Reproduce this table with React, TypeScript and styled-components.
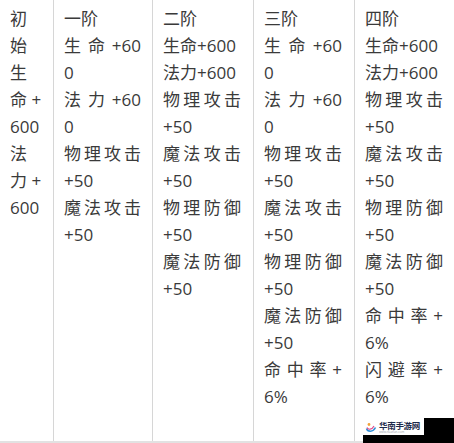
import * as React from 'react';
import styled, { createGlobalStyle } from 'styled-components';

const GlobalStyle = createGlobalStyle`
  html, body {
    margin: 0;
    padding: 0;
    background: #ffffff;
  }
`;

const Page = styled.div`
  position: relative;
  width: 454px;
  height: 443px;
  overflow: hidden;
  background: #ffffff;
  font-family: 'Open Sans', 'Noto Sans CJK SC', sans-serif;
  color: #3a3a3a;
`;

const Table = styled.div`
  display: flex;
  height: 441px;
  border-bottom: 2px solid #e2e2e2;
`;

const Column = styled.div<{ $width: number; $last?: boolean; $padRight: number }>`
  box-sizing: border-box;
  width: ${(p) => p.$width}px;
  flex-shrink: 0;
  padding: 5px ${(p) => p.$padRight}px 0 10px;
  border-right: ${(p) => (p.$last ? 'none' : '1px solid #d6d6d6')};
`;

const Line = styled.div<{ $justify?: boolean }>`
  font-size: 17px;
  line-height: 27px;
  height: 27px;
  white-space: nowrap;
  text-align: ${(p) => (p.$justify ? 'justify' : 'left')};
  text-align-last: ${(p) => (p.$justify ? 'justify' : 'left')};
  text-justify: inter-character;
`;

const Watermark = styled.div`
  position: absolute;
  right: 0;
  bottom: 0;
  width: 91px;
  height: 25px;
  background: #000000;
  z-index: 2;
`;

const Badge = styled.div`
  display: flex;
  align-items: center;
  gap: 2px;
  width: 61px;
  height: 17px;
  padding: 0 2px;
  box-sizing: border-box;
  background: #ffffff;
  overflow: hidden;
`;

const BadgeText = styled.div`
  display: flex;
  flex-direction: column;
`;

const BadgeTitle = styled.span`
  font-family: 'Noto Sans CJK SC', sans-serif;
  font-size: 8.5px;
  line-height: 11px;
  height: 11px;
  font-weight: 700;
  color: #1d2a4a;
  white-space: nowrap;
  letter-spacing: -0.3px;
`;

const BadgeSub = styled.span`
  font-size: 3px;
  line-height: 3px;
  height: 3px;
  color: #9aa0aa;
  white-space: nowrap;
  overflow: hidden;
`;

type Col = { width: number; padRight: number; paras: string[][] };

const columns: Col[] = [
  {
    width: 54,
    padRight: 12,
    paras: [
      ['初', '始', '生', '命 +', '600'],
      ['法', '力 +', '600'],
    ],
  },
  {
    width: 99,
    padRight: 11,
    paras: [
      ['一阶'],
      ['生 命 +60', '0'],
      ['法 力 +60', '0'],
      ['物理攻击', '+50'],
      ['魔法攻击', '+50'],
    ],
  },
  {
    width: 101,
    padRight: 12,
    paras: [
      ['二阶'],
      ['生命+600'],
      ['法力+600'],
      ['物理攻击', '+50'],
      ['魔法攻击', '+50'],
      ['物理防御', '+50'],
      ['魔法防御', '+50'],
    ],
  },
  {
    width: 101,
    padRight: 12,
    paras: [
      ['三阶'],
      ['生 命 +60', '0'],
      ['法 力 +60', '0'],
      ['物理攻击', '+50'],
      ['魔法攻击', '+50'],
      ['物理防御', '+50'],
      ['魔法防御', '+50'],
      ['命 中 率 +', '6%'],
    ],
  },
  {
    width: 99,
    padRight: 11,
    paras: [
      ['四阶'],
      ['生命+600'],
      ['法力+600'],
      ['物理攻击', '+50'],
      ['魔法攻击', '+50'],
      ['物理防御', '+50'],
      ['魔法防御', '+50'],
      ['命 中 率 +', '6%'],
      ['闪 避 率 +', '6%'],
    ],
  },
];

const Logo = () => (
  <svg width="12" height="12" viewBox="0 0 12 12">
    <path d="M1.5 7.5 C2.5 11 8 11.5 10.5 6.5" stroke="#2f8fd8" strokeWidth="1.6" fill="none" />
    <path d="M2 6.5 C3 9 7 9 9 5" stroke="#e04a8a" strokeWidth="1.2" fill="none" />
    <circle cx="4" cy="3.5" r="1.4" fill="#f2a23a" />
  </svg>
);

export default function App() {
  return (
    <Page>
      <GlobalStyle />
      <Table>
        {columns.map((col, ci) => (
          <Column
            key={ci}
            $width={col.width}
            $padRight={col.padRight}
            $last={ci === columns.length - 1}
          >
            {col.paras.map((lines, pi) =>
              lines.map((text, li) => (
                <Line key={`${pi}-${li}`} $justify={li < lines.length - 1}>
                  {text}
                </Line>
              ))
            )}
          </Column>
        ))}
      </Table>
      <Watermark>
        <Badge>
          <Logo />
          <BadgeText>
            <BadgeTitle>华南手游网</BadgeTitle>
            <BadgeSub>www.huanan.com</BadgeSub>
          </BadgeText>
        </Badge>
      </Watermark>
    </Page>
  );
}
